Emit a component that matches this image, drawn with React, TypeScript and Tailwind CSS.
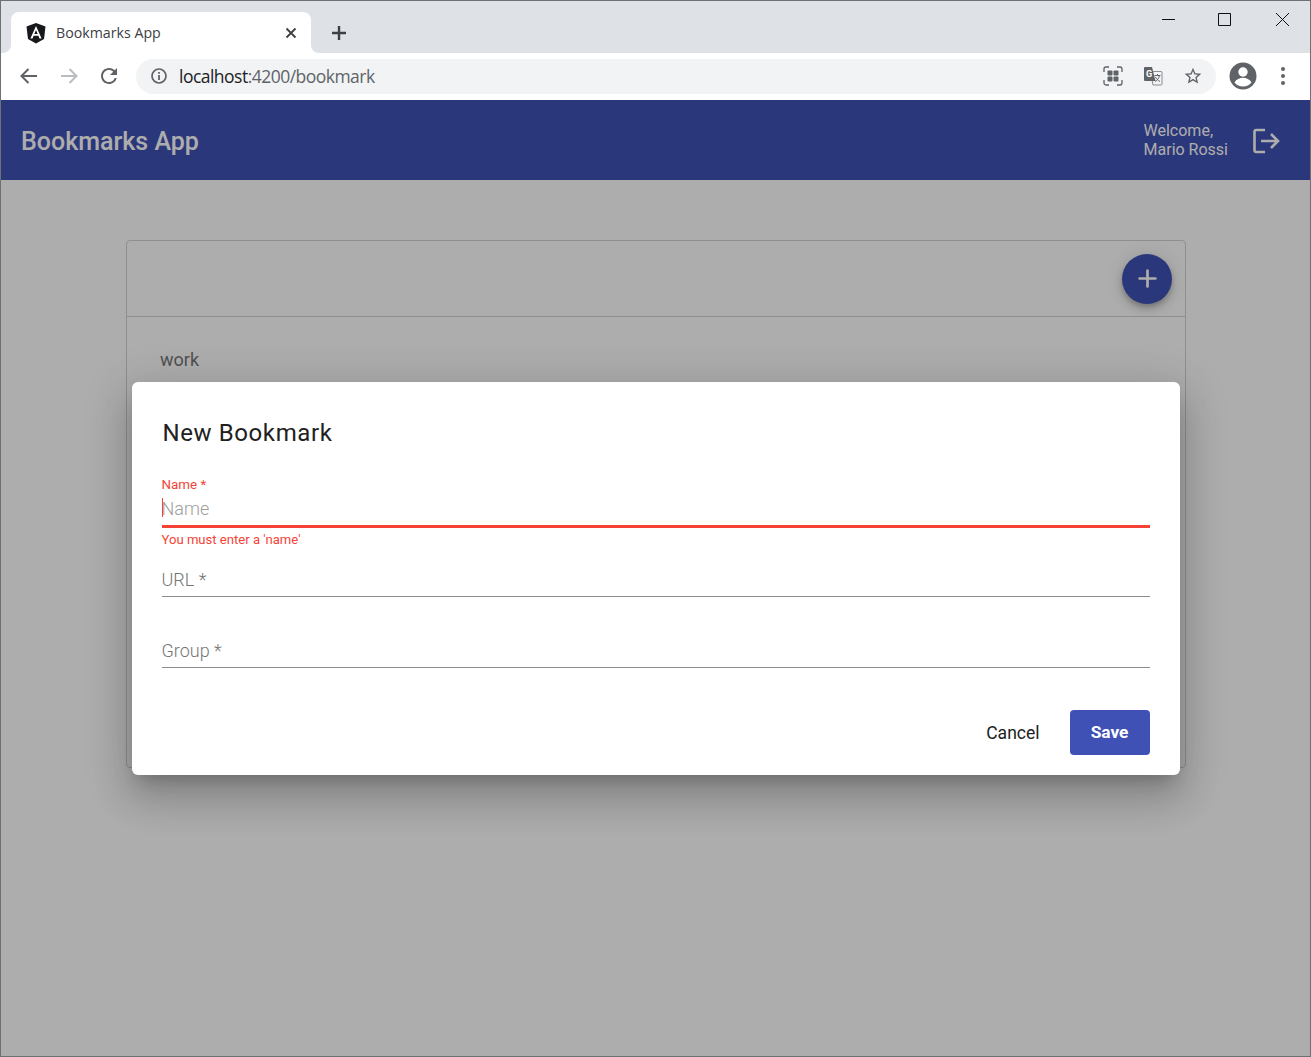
import { Plus } from "lucide-react"

function AngularLogo() {
  return (
    <svg width="22" height="22" viewBox="0 0 22 22">
      <path d="M11 1 20.5 4.4 19 17 11 21.5 3 17 1.5 4.4Z" fill="#16181b" />
      <path d="M11 4 5.4 16.5h2.1l1.1-2.8h4.8l1.1 2.8h2.1L11 4Zm-1.700 8L11 8l1.700 4H9.300Z" fill="#fff" />
    </svg>
  )
}

function TabFlare({ side }: { side: "left" | "right" }) {
  return (
    <svg
      width="8"
      height="8"
      viewBox="0 0 8 8"
      className={side === "left" ? "absolute bottom-0 -left-2" : "absolute bottom-0 -right-2 -scale-x-100"}
    >
      <path d="M8 0v8H0c4.400 0 8-3.600 8-8Z" fill="#fff" />
    </svg>
  )
}

function WindowControls() {
  return (
    <div className="flex items-center">
      <svg width="58" height="36" viewBox="0 0 58 36" className="text-[#111]">
        <path d="M24 18.500h13" stroke="currentColor" strokeWidth="1" fill="none" />
      </svg>
      <svg width="58" height="36" viewBox="0 0 58 36" className="text-[#111]">
        <path d="M22.500 12.500h12v12h-12z" stroke="currentColor" strokeWidth="1" fill="none" />
      </svg>
      <svg width="56" height="36" viewBox="0 0 56 36" className="text-[#111]">
        <path d="M22 12l13 13M35 12 22 25" stroke="currentColor" strokeWidth="1" fill="none" />
      </svg>
    </div>
  )
}

function BrowserChrome() {
  return (
    <div className="shrink-0">
      <div className="flex h-[52px] items-start bg-[#dee1e6] pl-[10px]">
        <div className="relative mt-[11px] flex h-[41px] w-[300px] items-center rounded-t-[8px] bg-white pl-[14px] pr-[14px]">
          <TabFlare side="left" />
          <TabFlare side="right" />
          <AngularLogo />
          <span className="ml-[9px] flex-1 font-['Open_Sans',sans-serif] text-[14.2px] text-[#3c4043]">Bookmarks App</span>
          <svg width="12" height="12" viewBox="0 0 12 12">
            <path d="M1.500 1.500l9 9M10.500 1.500l-9 9" stroke="#3c4043" strokeWidth="1.800" fill="none" />
          </svg>
        </div>
        <svg width="16" height="16" viewBox="0 0 16 16" className="ml-[20px] mt-[24px]">
          <path d="M8 1v14M1 8h14" stroke="#3c4043" strokeWidth="2.400" fill="none" />
        </svg>
        <div className="ml-auto">
          <WindowControls />
        </div>
      </div>
      <div className="flex h-[47px] items-center bg-white pb-px">
        <div className="flex w-[135px] items-center pl-[16px]">
          <svg width="24" height="24" viewBox="0 0 24 24" className="text-[#5f6368]">
            <path d="M20 12H5M11.500 5 4.500 12l7 7" stroke="currentColor" strokeWidth="2" fill="none" />
          </svg>
          <svg width="24" height="24" viewBox="0 0 24 24" className="ml-[16px] text-[#b9bcc0]">
            <path d="M4 12h15M12.500 5l7 7-7 7" stroke="currentColor" strokeWidth="2" fill="none" />
          </svg>
          <svg width="24" height="24" viewBox="0 0 24 24" className="ml-[16px] text-[#5f6368]">
            <path
              d="M17.650 6.350A7.958 7.958 0 0 0 12 4c-4.420 0-7.990 3.580-7.990 8s3.570 8 7.990 8c3.730 0 6.840-2.550 7.730-6h-2.080A5.990 5.990 0 0 1 12 18c-3.310 0-6-2.690-6-6s2.690-6 6-6c1.660 0 3.140.690 4.220 1.780L13 11h7V4l-2.350 2.350z"
              fill="currentColor"
            />
          </svg>
        </div>
        <div className="flex h-[35px] w-[1080px] items-center rounded-full bg-[#f1f3f4] pl-[14px] pr-[13px]">
          <svg width="18" height="18" viewBox="0 0 18 18">
            <circle cx="9" cy="9" r="7" stroke="#5f6368" strokeWidth="1.700" fill="none" />
            <path d="M9 8v5M9 5v1.700" stroke="#5f6368" strokeWidth="1.800" fill="none" />
          </svg>
          <span className="ml-[11px] flex-1 font-['Open_Sans',sans-serif] text-[17.5px] tracking-[-0.52px] text-[#5f6368]">
            <span className="text-[#202124]">localhost</span>:4200/bookmark
          </span>
          <svg width="20" height="20" viewBox="0 0 20 20" className="text-[#5f6368]">
            <path d="M1 6V3a2 2 0 0 1 2-2h3M14 1h3a2 2 0 0 1 2 2v3M19 14v3a2 2 0 0 1-2 2h-3M6 19H3a2 2 0 0 1-2-2v-3" stroke="currentColor" strokeWidth="1.300" fill="none" />
            <rect x="4.500" y="4.500" width="5" height="5" rx="1" fill="currentColor" />
            <rect x="10.500" y="4.500" width="5" height="5" rx="1" fill="currentColor" />
            <rect x="4.500" y="10.500" width="5" height="5" rx="1" fill="currentColor" />
            <rect x="10.500" y="10.500" width="5" height="5" rx="1" fill="currentColor" />
          </svg>
          <svg width="20" height="20" viewBox="0 0 20 20" className="ml-[20px]">
            <path d="M7.500 5.500H18a1 1 0 0 1 1 1V18a1 1 0 0 1-1 1H10Z" fill="#f1f3f4" stroke="#8a8d91" strokeWidth="1" />
            <path d="M2 1h7l3.500 14H2a1 1 0 0 1-1-1V2a1 1 0 0 1 1-1Z" fill="#5f6368" />
            <text x="3" y="11" fontFamily="Roboto, sans-serif" fontSize="9" fontWeight="700" fill="#fff">G</text>
            <path d="M11.500 9.500h6M14.500 8v1.500M16.500 9.500c-.500 3-2.500 5-4.500 6M12.500 11c.800 2 2.500 3.500 4.500 4.500" stroke="#5f6368" strokeWidth="1" fill="none" />
          </svg>
          <svg width="20" height="20" viewBox="0 0 24 24" className="ml-[20px]">
            <path
              d="M22 9.240l-7.190-.620L12 2 9.190 8.630 2 9.240l5.460 4.730L5.820 21 12 17.270 18.180 21l-1.630-7.030L22 9.240zM12 15.400l-3.760 2.270 1-4.280-3.320-2.880 4.380-.380L12 6.100l1.710 4.040 4.380.380-3.320 2.880 1 4.280L12 15.400z"
              fill="#5f6368"
            />
          </svg>
        </div>
        <svg width="28" height="28" viewBox="0 0 28 28" className="ml-[13px]">
          <circle cx="14" cy="14" r="13.500" fill="#5f6368" />
          <circle cx="14" cy="10" r="4.700" fill="#fff" />
          <path d="M5.500 20.500c1.700-3.200 5.400-4.700 8.500-4.700s6.800 1.500 8.500 4.700A10.800 10.800 0 0 1 14 24.500c-3.400 0-6.500-1.500-8.500-4Z" fill="#fff" />
        </svg>
        <div className="ml-[24px] flex flex-col gap-[3px]">
          <span className="h-[4px] w-[4px] rounded-full bg-[#5f6368]" />
          <span className="h-[4px] w-[4px] rounded-full bg-[#5f6368]" />
          <span className="h-[4px] w-[4px] rounded-full bg-[#5f6368]" />
        </div>
      </div>
    </div>
  )
}

function Field({ label }: { label: string }) {
  return (
    <div className="mt-[19px] flex h-[52px] flex-col justify-end">
      <div className="h-[33px] border-b border-[#8c8c8c] pt-[4px] text-[18px] font-light leading-[24px] text-[#757575]">{label}</div>
    </div>
  )
}

export default function App() {
  return (
    <div className="flex h-[1057px] w-[1311px] flex-col overflow-hidden border border-[#6f7072] font-['Roboto',sans-serif]">
      <BrowserChrome />
      <div className="relative flex-1 bg-white">
        <header className="flex h-[80px] items-center bg-[#3f51b5] pl-[20px] pr-[30px] text-white">
          <h1 className="flex-1 pt-[3px] text-[25px] font-medium">Bookmarks App</h1>
          <div className="text-[16px] leading-[19px]">
            Welcome,
            <br />
            Mario Rossi
          </div>
          <svg width="28" height="28" viewBox="0 0 28 28" className="ml-[24px] mt-[2px]">
            <path d="M13 3H4a1.500 1.500 0 0 0-1.500 1.500v19A1.500 1.500 0 0 0 4 25h9M9 14h17M19 7l7 7-7 7" stroke="currentColor" strokeWidth="2.600" fill="none" />
          </svg>
        </header>
        <div className="pl-[125px] pr-[124px] pt-[60px]">
          <div className="h-[528px] rounded-[4px] border border-[#d2d2d2] bg-white">
            <div className="flex h-[76px] items-center justify-end border-b border-[#d2d2d2] pr-[13px]">
              <button className="flex h-[50px] w-[50px] items-center justify-center rounded-full bg-[#3f51b5] text-white shadow-[0_3px_5px_-1px_rgba(0,0,0,0.2),0_6px_10px_0_rgba(0,0,0,0.14),0_1px_18px_0_rgba(0,0,0,0.12)]">
                <Plus size={27} strokeWidth={2.4} />
              </button>
            </div>
            <div className="px-[33px] pt-[32px] text-[18px] leading-[22px] text-[#777]">work</div>
          </div>
        </div>
        <div className="absolute inset-0 flex items-center justify-center bg-black/[0.32]">
          <div className="h-[393px] w-[1048px] rounded-[6px] bg-white px-[30px] pt-[30px] shadow-[0_11px_15px_-7px_rgba(0,0,0,0.2),0_24px_38px_3px_rgba(0,0,0,0.14),0_9px_46px_8px_rgba(0,0,0,0.12)]">
            <h2 className="ml-px text-[24px] font-[450] leading-[42px] tracking-[0.6px] text-[#212121]">New Bookmark</h2>
            <div className="mt-[24px] text-[13.4px] leading-[14px] text-[#f44336]">Name *</div>
            <div className="relative mt-[4px] h-[32px] border-b-[3px] border-[#f44336] text-[18px] font-light leading-[26px] text-[#9e9e9e]">
              <span className="absolute left-0 top-[2px] h-[19px] w-px bg-[#f44336]" />
              Name
            </div>
            <div className="mt-[5px] text-[13.1px] leading-[14px] text-[#f44336]">You must enter a 'name'</div>
            <div className="-mt-[21px]">
              <Field label="URL *" />
              <Field label="Group *" />
            </div>
            <div className="mt-[42px] flex items-center justify-end">
              <button className="mr-[30px] h-[45px] pt-[2px] text-[17.5px] text-[#212121]">Cancel</button>
              <button className="h-[45px] w-[80px] rounded-[4px] bg-[#3f51b5] pt-[2px] text-[17.3px] font-bold text-white">Save</button>
            </div>
          </div>
        </div>
      </div>
    </div>
  )
}
